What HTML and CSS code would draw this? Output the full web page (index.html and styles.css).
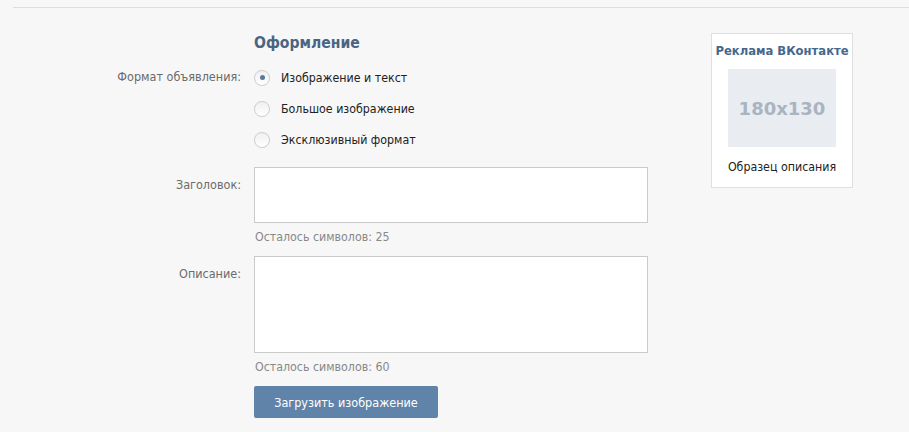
FILE: index.html
```html
<!DOCTYPE html>
<html lang="ru">
<head>
<meta charset="utf-8">
<title>Оформление</title>
<link rel="stylesheet" href="styles.css">
</head>
<body>
<div class="topline"></div>
<div class="page">
  <div class="form">
    <div class="label"></div>
    <h2 class="heading">Оформление</h2>

    <div class="label label-radio">Формат объявления:</div>
    <div class="radios">
      <div class="radio-row"><span class="radio checked"></span><span class="radio-text">Изображение и текст</span></div>
      <div class="radio-row"><span class="radio"></span><span class="radio-text">Большое изображение</span></div>
      <div class="radio-row"><span class="radio"></span><span class="radio-text">Эксклюзивный формат</span></div>
    </div>

    <div class="label label-field title-label">Заголовок:</div>
    <div class="field title-field">
      <div class="textarea textarea-title"></div>
      <div class="hint">Осталось символов: 25</div>
    </div>

    <div class="label label-field desc-label">Описание:</div>
    <div class="field desc-field">
      <div class="textarea textarea-desc"></div>
      <div class="hint">Осталось символов: 60</div>
      <button class="button">Загрузить изображение</button>
    </div>

    <div class="ad">
      <div class="ad-title">Реклама ВКонтакте</div>
      <div class="ad-image">180x130</div>
      <div class="ad-desc">Образец описания</div>
    </div>
  </div>
</div>
</body>
</html>
```

FILE: styles.css
```css
html, body {
  margin: 0;
  padding: 0;
  background: #f7f7f7;
  font-family: "DejaVu Sans Condensed", "DejaVu Sans", sans-serif;
  font-size: 12.3px;
  color: #222;
}

.topline {
  margin: 7px 0 0 13px;
  height: 0;
  border-top: 1px solid #dedede;
}

.page {
  padding-top: 24px;
}

.form {
  display: grid;
  grid-template-columns: 241px 394px 142px;
  column-gap: 13px;
  align-items: start;
}

.heading {
  margin: 0;
  height: 22px;
  line-height: 22px;
  font-size: 15.6px;
  font-weight: bold;
  color: #4a6583;
}

.label {
  text-align: right;
  color: #6b6b6b;
  line-height: 16px;
  font-size: 12.5px;
}

.label-radio {
  margin-top: 8px;
  padding-top: 7px;
}

.radios {
  margin-top: 8px;
}

.radio-row {
  height: 31px;
  display: flex;
  align-items: center;
  gap: 11px;
}

.radio {
  width: 14px;
  height: 14px;
  border: 1px solid #cfcfcf;
  border-radius: 50%;
  background: linear-gradient(#f0f0f0, #ffffff);
  box-shadow: 0 0 1px rgba(0, 0, 0, 0.08);
  position: relative;
  flex: none;
}

.radio.checked::after {
  content: "";
  position: absolute;
  left: 4.5px;
  top: 4.5px;
  width: 5px;
  height: 5px;
  border-radius: 50%;
  background: #5b7898;
}

.radio-text {
  color: #222;
}

.label-field {
  padding-top: 10px;
}

.title-label {
  margin-top: 12px;
}

.desc-label {
  margin-top: 11px;
}

.field {
  display: flex;
  flex-direction: column;
  align-items: flex-start;
}

.title-field {
  margin-top: 12px;
}

.desc-field {
  margin-top: 11px;
}

.textarea {
  box-sizing: border-box;
  width: 394px;
  background: #fff;
  border: 1px solid #cacaca;
}

.textarea-title {
  height: 56px;
}

.textarea-desc {
  height: 97px;
}

.hint {
  margin-top: 6px;
  line-height: 16px;
  color: #888;
  padding-left: 1px;
}

.button {
  margin-top: 11px;
  width: 184px;
  height: 32px;
  border: 0;
  border-radius: 2px;
  background: #6083a9;
  color: #fff;
  font-family: inherit;
  font-size: 12.5px;
  padding: 0;
}

.ad {
  grid-column: 3;
  grid-row: 1 / span 4;
  margin-left: 50px;
  margin-top: 1px;
  box-sizing: border-box;
  width: 142px;
  height: 155px;
  background: #fff;
  border: 1px solid #e0e0e0;
  display: flex;
  flex-direction: column;
  align-items: center;
}

.ad-title {
  margin-top: 9px;
  line-height: 16px;
  font-size: 12.9px;
  font-weight: bold;
  color: #45688e;
  white-space: nowrap;
}

.ad-image {
  margin-top: 10px;
  width: 108px;
  height: 78px;
  background: #e9edf2;
  color: #a9b4c1;
  font-weight: bold;
  font-family: "DejaVu Sans", sans-serif;
  font-size: 18px;
  display: flex;
  align-items: center;
  justify-content: center;
}

.ad-desc {
  margin-top: 12px;
  line-height: 16px;
  color: #222;
}
```
